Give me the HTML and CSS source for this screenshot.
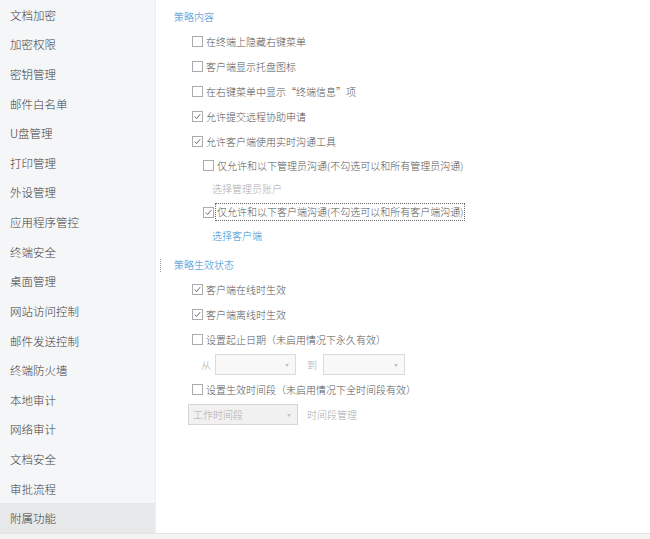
FILE: index.html
```html
<!DOCTYPE html>
<html lang="zh-CN">
<head>
<meta charset="utf-8">
<title>附属功能</title>
<link rel="stylesheet" href="styles.css">
</head>
<body>
<div class="app">
  <div class="body">
    <nav class="sidebar">
      <div class="nav-item">文档加密</div>
      <div class="nav-item">加密权限</div>
      <div class="nav-item">密钥管理</div>
      <div class="nav-item">邮件白名单</div>
      <div class="nav-item">U盘管理</div>
      <div class="nav-item">打印管理</div>
      <div class="nav-item">外设管理</div>
      <div class="nav-item">应用程序管控</div>
      <div class="nav-item">终端安全</div>
      <div class="nav-item">桌面管理</div>
      <div class="nav-item">网站访问控制</div>
      <div class="nav-item">邮件发送控制</div>
      <div class="nav-item">终端防火墙</div>
      <div class="nav-item">本地审计</div>
      <div class="nav-item">网络审计</div>
      <div class="nav-item">文档安全</div>
      <div class="nav-item">审批流程</div>
      <div class="nav-item active">附属功能</div>
    </nav>
    <main class="content">
      <div class="section-title first">策略内容</div>
      <div class="row"><span class="cb"></span><span class="lbl">在终端上隐藏右键菜单</span></div>
      <div class="row"><span class="cb"></span><span class="lbl">客户端显示托盘图标</span></div>
      <div class="row"><span class="cb"></span><span class="lbl">在右键菜单中显示“终端信息”项</span></div>
      <div class="row"><span class="cb checked"><svg viewBox="0 0 11 11"><path d="M2.2 5.6 L4.4 8 L8.8 2.6"/></svg></span><span class="lbl">允许提交远程协助申请</span></div>
      <div class="row"><span class="cb checked"><svg viewBox="0 0 11 11"><path d="M2.2 5.6 L4.4 8 L8.8 2.6"/></svg></span><span class="lbl">允许客户端使用实时沟通工具</span></div>
      <div class="subrow"><span class="cb"></span><span class="lbl pad">仅允许和以下管理员沟通(不勾选可以和所有管理员沟通)</span></div>
      <div class="subrow link-row"><span class="muted">选择管理员账户</span></div>
      <div class="subrow"><span class="cb checked"><svg viewBox="0 0 11 11"><path d="M2.2 5.6 L4.4 8 L8.8 2.6"/></svg></span><span class="lbl pad focus">仅允许和以下客户端沟通(不勾选可以和所有客户端沟通)</span></div>
      <div class="subrow link-row"><span class="link">选择客户端</span></div>

      <div class="section-title second"><span class="handle"></span>策略生效状态</div>
      <div class="row"><span class="cb checked"><svg viewBox="0 0 11 11"><path d="M2.2 5.6 L4.4 8 L8.8 2.6"/></svg></span><span class="lbl">客户端在线时生效</span></div>
      <div class="row"><span class="cb checked"><svg viewBox="0 0 11 11"><path d="M2.2 5.6 L4.4 8 L8.8 2.6"/></svg></span><span class="lbl">客户端离线时生效</span></div>
      <div class="row"><span class="cb"></span><span class="lbl">设置起止日期（未启用情况下永久有效）</span></div>
      <div class="row date-row">
        <span class="muted">从</span>
        <span class="select w81"><span class="arrow"></span></span>
        <span class="muted to">到</span>
        <span class="select w82"><span class="arrow"></span></span>
      </div>
      <div class="row"><span class="cb"></span><span class="lbl">设置生效时间段（未启用情况下全时间段有效）</span></div>
      <div class="row time-row">
        <span class="select w110 dark"><span class="sel-text">工作时间段</span><span class="arrow"></span></span>
        <span class="muted mgr">时间段管理</span>
      </div>
    </main>
  </div>
  <div class="footer"></div>
</div>
</body>
</html>
```

FILE: styles.css
```css
* { box-sizing: border-box; }

html, body {
  margin: 0;
  padding: 0;
  background: #ffffff;
}

body {
  font-family: "Noto Sans CJK SC", "Noto Sans", "Liberation Sans", sans-serif;
  font-weight: 300;
  color: #555;
}

.app {
  width: 650px;
  height: 539px;
  display: flex;
  flex-direction: column;
  overflow: hidden;
}

.body {
  height: 533px;
  display: flex;
}

.sidebar {
  width: 156px;
  flex: none;
  background: #f5f6f8;
  border-right: 1px solid #eeeff1;
  display: flex;
  flex-direction: column;
}

.nav-item {
  flex: 1;
  display: flex;
  align-items: center;
  padding-left: 10px;
  font-size: 11.5px;
  color: #3e3e3e;
}

.nav-item.active {
  background: #e7e8ea;
}

.content {
  flex: 1;
  position: relative;
  padding-left: 18px;
  display: flex;
  flex-direction: column;
  font-size: 10px;
}

.section-title {
  height: 20px;
  line-height: 20px;
  font-size: 10px;
  color: #2b8fd5;
  position: relative;
}

.section-title.first { margin-top: 7px; margin-bottom: 2px; }
.section-title.second { margin-top: 8px; margin-bottom: 2px; }

.handle {
  position: absolute;
  left: -14px;
  top: 4px;
  width: 1px;
  height: 13px;
  border-left: 1px dotted #9a9a9a;
}

.row {
  height: 25px;
  display: flex;
  align-items: center;
  padding-left: 18px;
}

.subrow {
  height: 23.3px;
  display: flex;
  align-items: center;
  padding-left: 29px;
}

.link-row { padding-left: 38px; }

.cb {
  width: 11px;
  height: 11px;
  flex: none;
  border: 1px solid #ababab;
  background: #fff;
  margin-right: 3px;
  display: flex;
}

.cb svg {
  width: 9px;
  height: 9px;
  fill: none;
  stroke: #5a5a5a;
  stroke-width: 1.1;
}

.lbl {
  color: #555;
  line-height: 16px;
  white-space: nowrap;
}

.subrow .cb { margin-right: 1px; }

.lbl.pad {
  padding: 0 1px;
  border: 1px dotted transparent;
  line-height: 16px;
}

.lbl.focus {
  border-color: #666;
}

.muted { color: #ababab; white-space: nowrap; }

.link { color: #2b8fd5; }

.date-row { padding-left: 27px; }

.select {
  height: 21px;
  border: 1px solid #dcdcdc;
  background: #f8f8f8;
  position: relative;
  display: flex;
  align-items: center;
  flex: none;
}

.select.dark { background: #f1f1f1; border-color: #d6d6d6; }

.w81 { width: 81px; margin-left: 4px; }
.w82 { width: 82px; margin-left: 6px; }
.w110 { width: 110px; }

.to { margin-left: 11px; }

.arrow {
  position: absolute;
  right: 6px;
  top: 9px;
  width: 0;
  height: 0;
  border-left: 2.5px solid transparent;
  border-right: 2.5px solid transparent;
  border-top: 3px solid #c2c2c2;
}

.sel-text {
  color: #aaa;
  padding-left: 4px;
}

.time-row { padding-left: 14px; }

.mgr { margin-left: 9px; }

.footer {
  flex: 1;
  background: #f4f4f5;
  border-top: 1px solid #e3e3e3;
}
```
